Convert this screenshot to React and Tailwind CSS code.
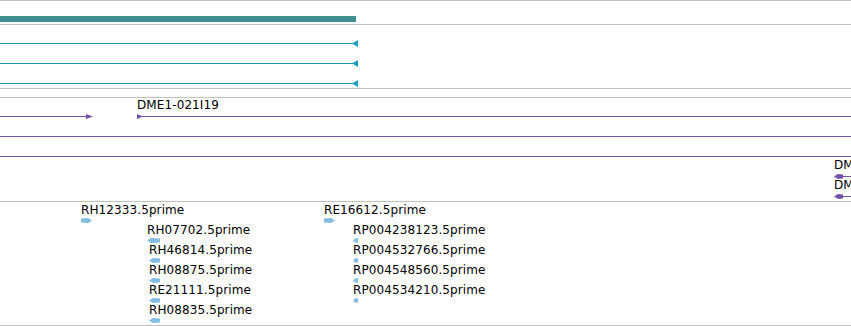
import React from "react";

const GRAY = "border-[#c2c2c2]";
const LB = "#82bde3";
const PURPLE = "#7453a9";

function ArrowL({ w = 12, h = 5, color, tip = 4 }) {
  return (
    <svg width={w} height={h} className="block">
      <polygon points={`0,${h / 2} ${tip},0 ${w},0.6 ${w},${h - 0.6} ${tip},${h}`} fill={color} />
    </svg>
  );
}

function ArrowR({ w = 10, h = 5, color, tip = 4 }) {
  return (
    <svg width={w} height={h} className="block">
      <polygon points={`0,0.6 ${w - tip},0 ${w},${h / 2} ${w - tip},${h} 0,${h - 0.6}`} fill={color} />
    </svg>
  );
}

/* An EST feature on the canvas: label above a strand glyph, placed at its genomic x */
function Est({ x, label, dir, w }) {
  return (
    <div className="absolute top-px flex flex-col items-start gap-px" style={{ left: x }}>
      <span className="whitespace-nowrap">{label}</span>
      {dir === "R" ? (
        <ArrowR w={w} h={5} tip={4} color={LB} />
      ) : (
        <ArrowL w={w} h={5} tip={w < 8 ? 3 : 4} color={LB} />
      )}
    </div>
  );
}

const estRows = [
  [
    { x: 81, label: "RH12333.5prime", dir: "R", w: 11 },
    { x: 324, label: "RE16612.5prime", dir: "R", w: 11 },
  ],
  [
    { x: 147, label: "RH07702.5prime", dir: "L", w: 13 },
    { x: 353, label: "RP004238123.5prime", dir: "L", w: 5 },
  ],
  [
    { x: 149, label: "RH46814.5prime", dir: "L", w: 11 },
    { x: 353, label: "RP004532766.5prime", dir: "L", w: 5 },
  ],
  [
    { x: 149, label: "RH08875.5prime", dir: "L", w: 11 },
    { x: 353, label: "RP004548560.5prime", dir: "L", w: 5 },
  ],
  [
    { x: 149, label: "RE21111.5prime", dir: "L", w: 11 },
    { x: 353, label: "RP004534210.5prime", dir: "L", w: 5 },
  ],
  [{ x: 149, label: "RH08835.5prime", dir: "L", w: 11 }],
];

export default function App() {
  return (
    <div className="w-[851px] h-[326px] bg-white overflow-hidden font-['DejaVu_Sans',sans-serif] text-[12px] leading-[14px] tracking-[0.1px] text-black">
      {/* Track 1: wide teal bar */}
      <div className={`h-[25px] border-y ${GRAY} pt-[15px]`}>
        <div className="h-[6px] w-[356px] bg-[#418f91]" />
      </div>

      {/* Track 2: teal transcripts */}
      <div className={`h-[64px] border-b ${GRAY} pt-[15px] flex flex-col gap-[13px]`}>
        {[0, 1, 2].map((i) => (
          <div key={i} className="h-[7px] shrink-0 flex items-center">
            <div className="h-px w-[353px] bg-[#1c91ab]" />
            <svg width="6" height="7" className="block -ml-px">
              <polygon points="0,3.5 6,0 6,7" fill="#169fbd" />
            </svg>
          </div>
        ))}
      </div>

      <div className="h-[8px]" />

      {/* Track 3: purple clones */}
      <div className={`h-[105px] border-y ${GRAY} flex flex-col`}>
        <div className="relative h-[20px] shrink-0">
          <div className="absolute left-0 top-[16px] flex items-center">
            <div className="h-px w-[87px]" style={{ background: PURPLE }} />
            <svg width="7" height="5" className="block -ml-px">
              <polygon points="0,0 7,2.5 0,5" fill={PURPLE} />
            </svg>
          </div>
          <div className="absolute left-[137px] top-0 flex flex-col items-start">
            <span className="whitespace-nowrap">DME1-021I19</span>
            <div className="relative w-[714px] h-[5px] mt-[2px] flex items-center">
              <div className="h-px w-full" style={{ background: PURPLE }} />
              <svg width="6" height="5" className="absolute left-0 top-0 block">
                <polygon points="0,0 6,2.5 0,5" fill={PURPLE} />
              </svg>
            </div>
          </div>
        </div>
        <div className="h-[20px] shrink-0 flex items-end">
          <div className="h-px w-full mb-[1px]" style={{ background: PURPLE }} />
        </div>
        <div className="h-[20px] shrink-0 flex items-end">
          <div className="h-px w-full mb-[1px]" style={{ background: PURPLE }} />
        </div>
        {[0, 1].map((i) => (
          <div key={i} className="relative h-[20px] shrink-0">
            <div className="absolute left-[834px] top-0 flex flex-col items-start">
              <span className="whitespace-nowrap">DM</span>
              <div className="flex items-center mt-[2px]">
                <ArrowL w={9} h={5} tip={4} color={PURPLE} />
                <div className="h-px w-[10px] -ml-px" style={{ background: PURPLE }} />
              </div>
            </div>
          </div>
        ))}
      </div>

      {/* Track 4: ESTs */}
      <div className={`h-[124px] border-b ${GRAY} flex flex-col`}>
        {estRows.map((row, i) => (
          <div key={i} className="relative h-[20px] shrink-0">
            {row.map((f) => (
              <Est key={f.label} {...f} />
            ))}
          </div>
        ))}
      </div>
    </div>
  );
}
